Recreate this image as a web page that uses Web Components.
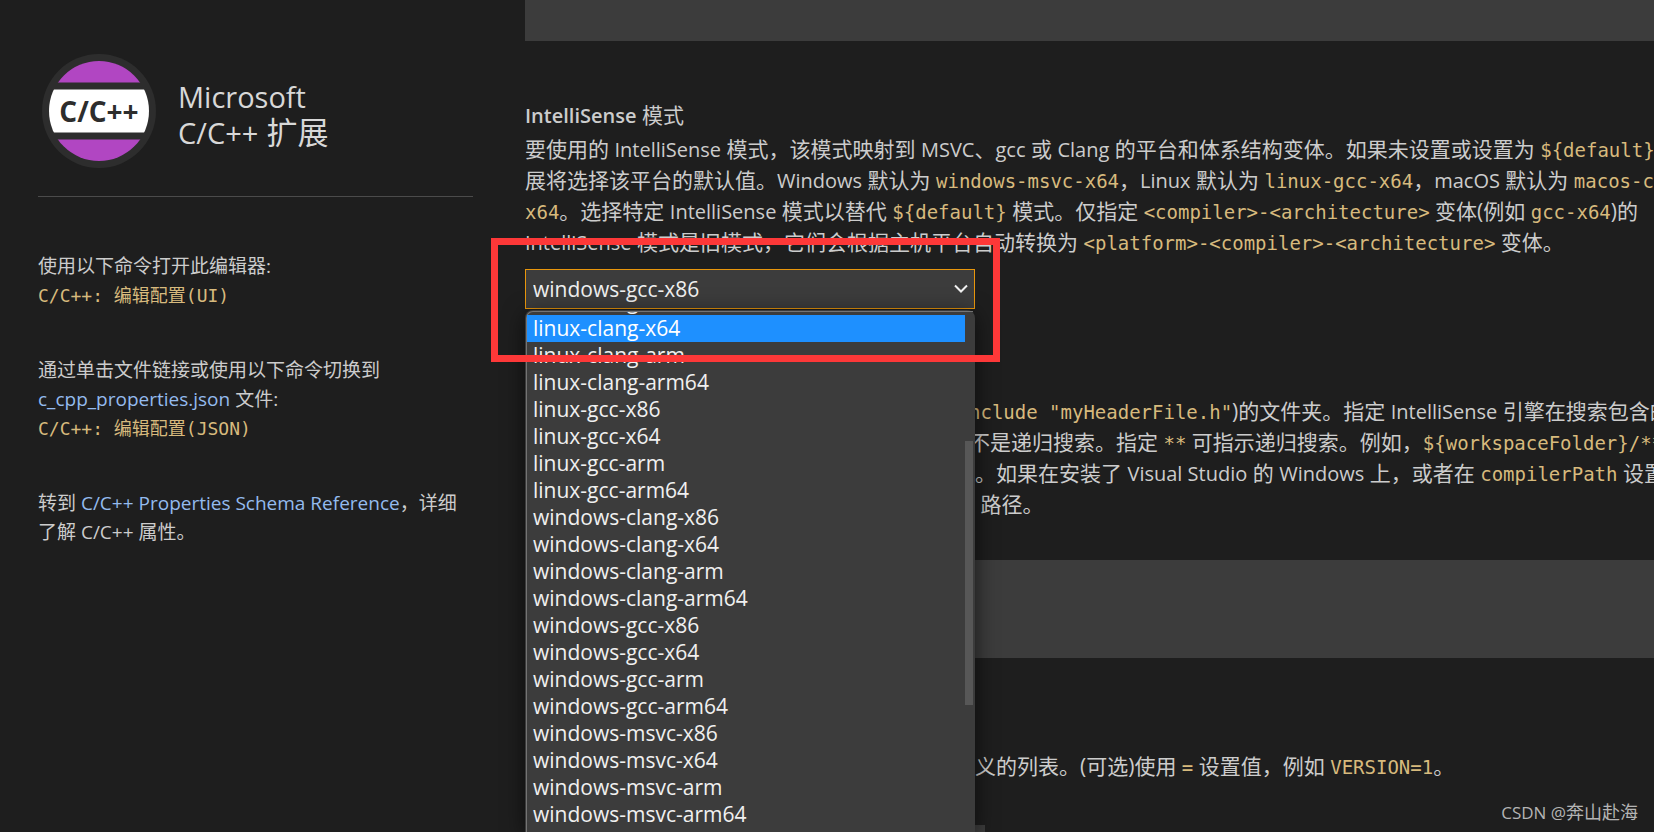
<!DOCTYPE html>
<html lang="zh-CN">
<head>
<meta charset="utf-8">
<title>C/C++ 配置</title>
<style>
  body { margin: 0; background: #1e1e1e; }
</style>
</head>
<body>
<config-page></config-page>
<script>
const define = (name, html, setup) => {
  const template = document.createElement('template');
  template.innerHTML = html;
  customElements.define(name, class extends HTMLElement {
    constructor() {
      super();
      this.attachShadow({ mode: 'open' }).append(template.content.cloneNode(true));
    }
    connectedCallback() { if (setup) setup(this, this.shadowRoot); }
  });
};

/* Inline runs; line-height 1 keeps them inside the line of their parent */
define('latin-run', `<style>:host { display: inline; font-size: var(--latin, 20px); line-height: 1; }</style><slot></slot>`);
define('code-run', `<style>
  :host { display: inline; color: #d7ba7d; line-height: 1; }
  code { font: var(--code, 19px)/1 "DejaVu Sans Mono", "Noto Sans CJK SC", monospace; }
</style><code><slot></slot></code>`);
define('doc-link', `<style>
  :host { line-height: 1; }
  a { color: #94bbee; text-decoration: none; font-size: var(--latin, 20px); }
</style><a href="#"><slot></slot></a>`);

/* One line of a description; "lead" is the part that ends at the list's right edge */
define('text-line', `<style>
  :host { display: block; height: 31px; line-height: 31px; white-space: nowrap; }
  :host([indent]) { padding-left: 444px; }
  ::slotted([slot=lead]) { display: inline-block; width: 450px; text-align: right; }
</style><slot name="lead"></slot><slot></slot>`);

define('extension-logo', `<style>
  :host { display: block; width: 114px; height: 114px; flex: none; }
  svg { display: block; }
</style>
<svg viewBox="0 0 114 114" width="114" height="114" role="img" aria-label="C/C++">
  <defs><clipPath id="disc"><circle cx="57" cy="57" r="50"/></clipPath></defs>
  <circle cx="57" cy="57" r="57" fill="#2d2d2d"/>
  <g clip-path="url(#disc)">
    <rect x="7" y="7" width="100" height="21.5" fill="#b146c2"/>
    <rect x="7" y="35.5" width="100" height="43" fill="#fff"/>
    <rect x="7" y="85.5" width="100" height="22" fill="#b146c2"/>
  </g>
  <text x="57" y="68" text-anchor="middle" font-family="Open Sans, sans-serif" font-weight="700" font-size="28" fill="#2d2d2d">C/C++</text>
</svg>`);

define('side-panel', `<style>
  :host { display: block; padding-top: 54px; --latin: 19px; --code: 18px; }
  header { display: flex; gap: 22px; padding: 0 0 28px 4px; border-bottom: 1px solid #4b4b4b; }
  h1 { margin: 0; padding-top: 24px; font-size: 31px; line-height: 36px; font-weight: 400; color: #d8d8d8; --latin: 29px; }
  p { margin: 0 0 46px; font-size: 19px; line-height: 29px; white-space: nowrap; }
  header + p { margin-top: 55px; }
</style>
<header>
  <extension-logo></extension-logo>
  <h1><latin-run>Microsoft</latin-run><br><latin-run>C/C++</latin-run> 扩展</h1>
</header>
<p>使用以下命令打开此编辑器:<br><code-run>C/C++: 编辑配置(UI)</code-run></p>
<p>通过单击文件链接或使用以下命令切换到<br><doc-link>c_cpp_properties.json</doc-link> 文件:<br><code-run>C/C++: 编辑配置(JSON)</code-run></p>
<p>转到 <doc-link>C/C++ Properties Schema Reference</doc-link>，详细<br>了解 <latin-run>C/C++</latin-run> 属性。</p>`);

const modes = ['linux-clang-x86','linux-clang-x64','linux-clang-arm','linux-clang-arm64','linux-gcc-x86','linux-gcc-x64','linux-gcc-arm','linux-gcc-arm64','windows-clang-x86','windows-clang-x64','windows-clang-arm','windows-clang-arm64','windows-gcc-x86','windows-gcc-x64','windows-gcc-arm','windows-gcc-arm64','windows-msvc-x86','windows-msvc-x64','windows-msvc-arm','windows-msvc-arm64'];

define('mode-select', `<style>
  :host { display: block; position: relative; width: 450px; margin-top: 11px; font-size: 21px; color: #f0f0f0; }
  select { display: block; box-sizing: border-box; width: 100%; height: 40px; padding: 0 7px; appearance: none;
    border: 1px solid #e8960c; border-radius: 0; outline: 0; background: #3c3c3c; color: inherit; font: inherit; }
  .chevron { position: absolute; right: 7px; top: 15px; }
  .popup { position: absolute; z-index: 1; top: 41px; left: 0; box-sizing: border-box; width: 450px; height: calc(100vh - 310px);
    padding: 1px 2px 0 1px; background: #3c3c3c; border-radius: 8px 8px 0 0; box-shadow: 0 4px 22px #0009; }
  .frame { height: 100%; box-sizing: border-box; border: solid #747474; border-width: 1px 0 0 1px; border-radius: 7px 0 0 0; display: flex; }
  ul { flex: 1; margin: 0; padding: 0 0 54px; list-style: none; overflow: hidden; height: 100%; box-sizing: border-box; }
  li { height: 27px; line-height: 27px; padding-left: 6px; }
  li[aria-selected=true] { background: #1e90ff; color: #fff; }
  .track { width: 8px; padding-top: 129px; }
  .thumb { height: 264px; background: #575757; }
  .mark { position: absolute; z-index: 2; left: -34px; top: -31px; box-sizing: border-box; width: 509px; height: 124px;
    border: 7px solid #fd3838; pointer-events: none; }
</style>
<select aria-label="IntelliSense 模式"><option>windows-gcc-x86</option></select>
<svg class="chevron" width="14" height="9" viewBox="0 0 14 9" fill="none" stroke="#f0f0f0" stroke-width="2"><path d="M1 1.5 7 7.5 13 1.5"/></svg>
<div class="popup"><div class="frame">
  <ul role="listbox" aria-label="IntelliSense 模式"></ul>
  <div class="track"><div class="thumb"></div></div>
</div></div>
<div class="mark"></div>`, (host, root) => {
  const list = root.querySelector('ul');
  for (const mode of modes) {
    const item = document.createElement('li');
    item.setAttribute('role', 'option');
    item.setAttribute('aria-selected', mode === 'linux-clang-x64');
    item.textContent = mode;
    list.append(item);
  }
  list.scrollTop = 24;
});

define('list-input', `<style>
  :host { display: block; margin-top: 40px; }
  textarea { display: block; box-sizing: border-box; width: 100%; height: 98px; border: 0; padding: 6px; resize: none; background: #3c3c3c; color: #ccc; font: inherit; }
  :host([partial]) { margin-top: 0; }
  :host([partial]) textarea { height: 41px; }
</style><textarea aria-label="值"></textarea>`);

define('setting-block', `<style>
  :host { display: block; margin-top: var(--space, 59px); }
  ::slotted(h2) { margin: 0 0 4px; height: 30px; font-size: 21px; line-height: 30px; font-weight: 400; }
</style><slot></slot>`);

define('config-page', `<style>
  :host { display: grid; grid-template-columns: 435px minmax(0, 1fr); column-gap: 52px; padding-left: 38px; height: 100vh; box-sizing: border-box;
    overflow: hidden; position: relative; color: #ccc; font: 21px "Open Sans", "Noto Sans CJK SC", sans-serif; }
  h2 b { font-weight: 600; }
  .includes { --space: 87px; }
  .defines { --space: 93px; }
  .short { display: block; box-sizing: border-box; width: 460px; height: 40px; margin-top: 43px; border: 0; background: #3c3c3c; }
  .credit { position: absolute; right: 16px; bottom: 7px; font-size: 18px; line-height: 26px; color: #b4b4b4; --latin: 17px; }
</style>
<side-panel></side-panel>
<main>
  <list-input partial></list-input>
  <setting-block>
    <h2><b><latin-run>IntelliSense</latin-run></b> 模式</h2>
    <text-line>要使用的 <latin-run>IntelliSense</latin-run> 模式，该模式映射到 <latin-run>MSVC</latin-run>、<latin-run>gcc</latin-run> 或 <latin-run>Clang</latin-run> 的平台和体系结构变体。如果未设置或设置为 <code-run>\${default}</code-run></text-line>
    <text-line>展将选择该平台的默认值。<latin-run>Windows</latin-run> 默认为 <code-run>windows-msvc-x64</code-run>，<latin-run>Linux</latin-run> 默认为 <code-run>linux-gcc-x64</code-run>，<latin-run>macOS</latin-run> 默认为 <code-run>macos-c</code-run></text-line>
    <text-line><code-run>x64</code-run>。选择特定 <latin-run>IntelliSense</latin-run> 模式以替代 <code-run>\${default}</code-run> 模式。仅指定 <code-run>&lt;compiler&gt;-&lt;architecture&gt;</code-run> 变体(例如 <code-run>gcc-x64</code-run>)的</text-line>
    <text-line><latin-run>IntelliSense</latin-run> 模式是旧模式，它们会根据主机平台自动转换为 <code-run>&lt;platform&gt;-&lt;compiler&gt;-&lt;architecture&gt;</code-run> 变体。</text-line>
    <mode-select></mode-select>
  </setting-block>
  <setting-block class="includes">
    <text-line indent><code-run>nclude "myHeaderFile.h"</code-run>)的文件夹。指定 <latin-run>IntelliSense</latin-run> 引擎在搜索包含的</text-line>
    <text-line indent>不是递归搜索。指定 <code-run>**</code-run> 可指示递归搜索。例如，<code-run>\${workspaceFolder}/**</code-run></text-line>
    <text-line><span slot="lead">会</span>。如果在安装了 <latin-run>Visual Studio</latin-run> 的 <latin-run>Windows</latin-run> 上，或者在 <code-run>compilerPath</code-run> 设置</text-line>
    <text-line><span slot="lead"><latin-run>e</latin-run></span> 路径。</text-line>
    <list-input></list-input>
  </setting-block>
  <setting-block class="defines">
    <text-line><span slot="lead">定</span>义的列表。(可选)使用 <code-run>=</code-run> 设置值，例如 <code-run>VERSION=1</code-run>。</text-line>
    <input class="short" aria-label="定义">
  </setting-block>
</main>
<div class="credit"><latin-run>CSDN @</latin-run>奔山赴海</div>`);
</script>
</body>
</html>
